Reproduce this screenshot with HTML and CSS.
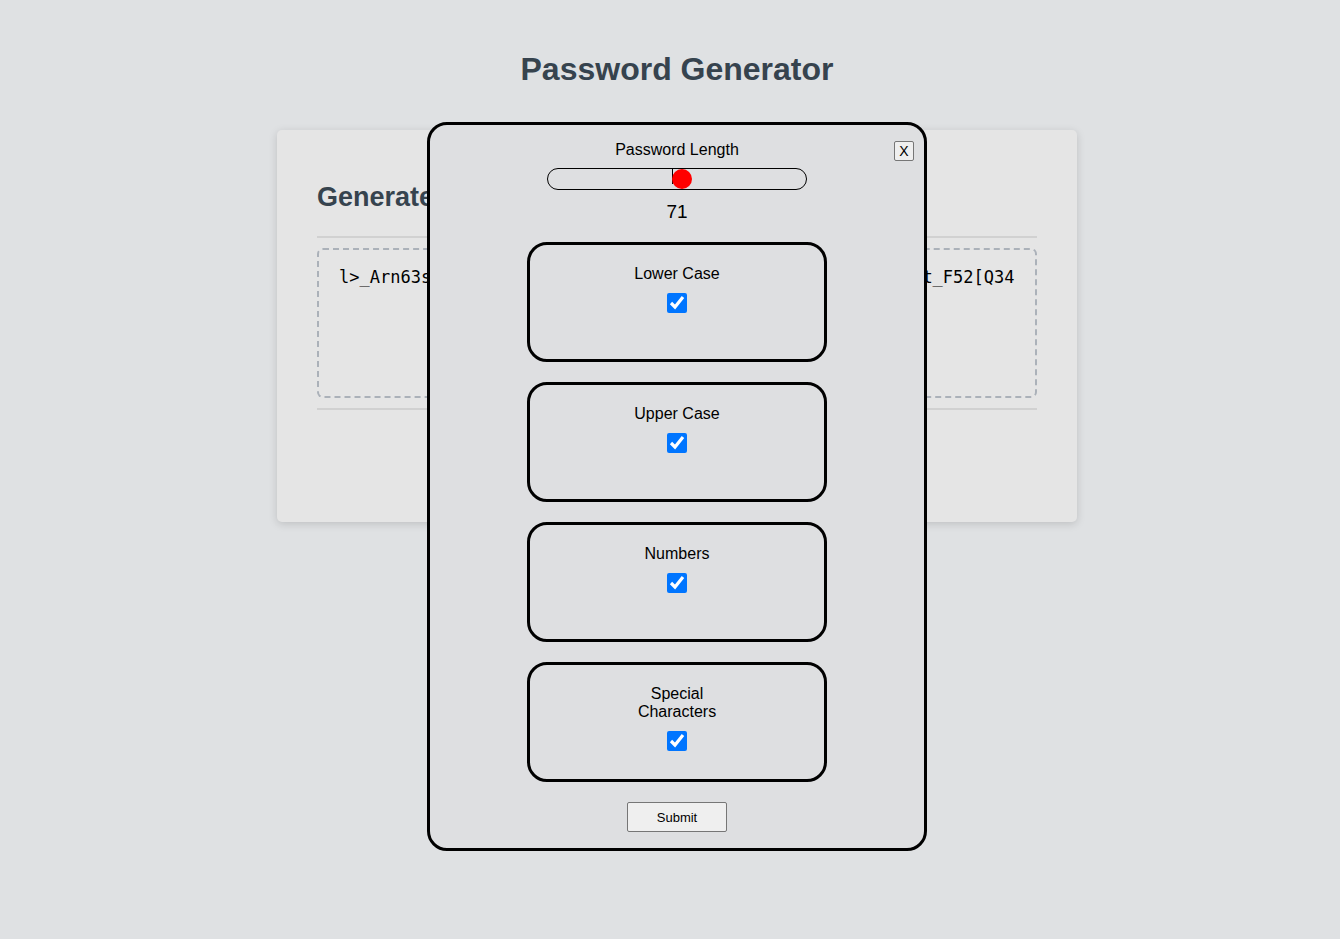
FILE: index.html
```html
<!DOCTYPE html>
<html lang="en">
<head>
<meta charset="UTF-8">
<meta name="viewport" content="width=device-width, initial-scale=1">
<title>Password Generator</title>
<link rel="stylesheet" href="styles.css">
</head>
<body>
<div class="wrapper">
  <header class="page-header"><h1>Password Generator</h1></header>
  <main class="card">
    <div class="card-header"><h2>Generate a Password</h2></div>
    <div class="card-body">
      <textarea class="password" readonly aria-label="Your Secure Password">l&gt;_Arn63sKd8!mPz4@Wq7Lx2Vb9Yt5Rc1Hg6Nf3Js0Ue8Ia4Oo7Ek2TwBt_F52[Q34</textarea>
    </div>
  </main>
</div>
<div class="overlay">
  <form class="modal" role="dialog" aria-label="Password options">
    <button type="button" class="close" aria-label="Close">X</button>
    <label for="length">Password Length</label>
    <input type="range" id="length" class="slider" min="8" max="129" value="71">
    <output class="value" for="length">71</output>
    <div class="options">
      <div class="option"><label for="lower">Lower Case</label><input type="checkbox" id="lower" checked></div>
      <div class="option"><label for="upper">Upper Case</label><input type="checkbox" id="upper" checked></div>
      <div class="option"><label for="numbers">Numbers</label><input type="checkbox" id="numbers" checked></div>
      <div class="option"><label for="special">Special Characters</label><input type="checkbox" id="special" checked></div>
    </div>
    <button type="button" class="submit">Submit</button>
  </form>
</div>
</body>
</html>
```
FILE: styles.css
```css
* {
  box-sizing: border-box;
}

body {
  margin: 0;
  min-height: 100vh;
  position: relative;
  background: #dfe1e3;
  color: #000;
  font-family: Arial, "Liberation Sans", sans-serif;
  font-size: 16px;
  line-height: 18px;
}

.wrapper {
  padding: 50px 20px 30px 34px;
}

.page-header {
  text-align: center;
}

h1,
h2 {
  margin: 0;
  color: #36434e;
}

h1 {
  font-size: 32px;
  line-height: 38px;
}

h2 {
  font-size: 27px;
  line-height: 32px;
}

.card {
  max-width: 800px;
  margin: 42px auto 0;
  padding: 51px 40px 112px;
  background: #e5e5e5;
  border-radius: 5px;
  box-shadow: 0 2px 8px rgba(0, 0, 0, 0.15);
}

.card-header {
  padding-bottom: 23px;
}

.card-body {
  padding: 10px 0;
  border-top: 2px solid #d1d1d1;
  border-bottom: 2px solid #d1d1d1;
}

.password {
  display: block;
  width: 100%;
  height: 150px;
  padding: 16px 20px;
  overflow: hidden;
  resize: none;
  background: transparent;
  border: 2px dashed #abb1b9;
  border-radius: 6px;
  color: #000;
  font-family: "DejaVu Sans Mono", monospace;
  font-size: 17px;
  line-height: 22px;
  white-space: pre;
}

.overlay {
  position: absolute;
  inset: 0;
  display: flex;
  justify-content: center;
  align-items: flex-start;
  padding: 122px 0 0 14px;
}

.modal {
  position: relative;
  display: flex;
  flex-direction: column;
  align-items: center;
  width: 100%;
  max-width: 500px;
  padding: 16px 0;
  background: #dedfe1;
  border: 3px solid #000;
  border-radius: 20px;
}

.close {
  position: absolute;
  top: 16px;
  right: 10px;
  width: 20px;
  height: 20px;
  padding: 0;
}

.close,
.submit {
  background: #efefef;
  border: 1px solid #767676;
  border-radius: 2px;
  color: #000;
  font-family: inherit;
  font-size: 13px;
}

.close {
  font-size: 14px;
}

.slider {
  appearance: none;
  width: 260px;
  height: 22px;
  margin: 9px 0 10px;
  background: linear-gradient(#000, #000) 124px 0 / 1px 15px no-repeat;
  border: 1px solid #000;
  border-radius: 11px;
}

.slider::-webkit-slider-thumb {
  appearance: none;
  width: 20px;
  height: 20px;
  background: #f00;
  border-radius: 50%;
}

.value {
  font-size: 19px;
  line-height: 24px;
}

.options {
  display: grid;
  gap: 20px;
  margin: 18px 0 20px;
}

.option {
  display: flex;
  flex-direction: column;
  align-items: center;
  gap: 10px;
  width: 300px;
  height: 120px;
  padding-top: 20px;
  border: 3px solid #000;
  border-radius: 20px;
  text-align: center;
}

.option label {
  max-width: 100px;
}

.option input {
  width: 20px;
  height: 20px;
  margin: 0;
}

.submit {
  width: 100px;
  height: 30px;
}
```
